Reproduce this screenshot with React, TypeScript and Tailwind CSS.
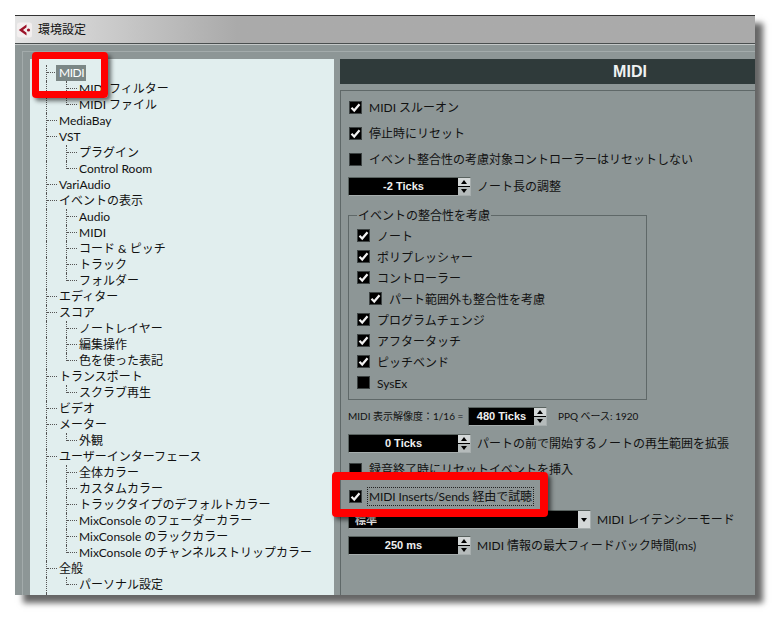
import React from 'react';

type TreeItem = { label: string; level: 1 | 2; last?: boolean; selected?: boolean };

const treeItems: TreeItem[] = [
  { label: 'MIDI', level: 1, selected: true },
  { label: 'MIDI フィルター', level: 2 },
  { label: 'MIDI ファイル', level: 2, last: true },
  { label: 'MediaBay', level: 1 },
  { label: 'VST', level: 1 },
  { label: 'プラグイン', level: 2 },
  { label: 'Control Room', level: 2, last: true },
  { label: 'VariAudio', level: 1 },
  { label: 'イベントの表示', level: 1 },
  { label: 'Audio', level: 2 },
  { label: 'MIDI', level: 2 },
  { label: 'コード & ピッチ', level: 2 },
  { label: 'トラック', level: 2 },
  { label: 'フォルダー', level: 2, last: true },
  { label: 'エディター', level: 1 },
  { label: 'スコア', level: 1 },
  { label: 'ノートレイヤー', level: 2 },
  { label: '編集操作', level: 2 },
  { label: '色を使った表記', level: 2, last: true },
  { label: 'トランスポート', level: 1 },
  { label: 'スクラブ再生', level: 2, last: true },
  { label: 'ビデオ', level: 1 },
  { label: 'メーター', level: 1 },
  { label: '外観', level: 2, last: true },
  { label: 'ユーザーインターフェース', level: 1 },
  { label: '全体カラー', level: 2 },
  { label: 'カスタムカラー', level: 2 },
  { label: 'トラックタイプのデフォルトカラー', level: 2 },
  { label: 'MixConsole のフェーダーカラー', level: 2 },
  { label: 'MixConsole のラックカラー', level: 2 },
  { label: 'MixConsole のチャンネルストリップカラー', level: 2, last: true },
  { label: '全般', level: 1 },
  { label: 'パーソナル設定', level: 2, last: true },
  { label: '', level: 1 },
];

const groupItems = [
  { label: 'ノート', checked: true },
  { label: 'ポリプレッシャー', checked: true },
  { label: 'コントローラー', checked: true },
  { label: 'パート範囲外も整合性を考慮', checked: true, nested: true },
  { label: 'プログラムチェンジ', checked: true },
  { label: 'アフタータッチ', checked: true },
  { label: 'ピッチベンド', checked: true },
  { label: 'SysEx', checked: false },
];

const TreeRow = ({ item }: { item: TreeItem }) => (
  <div className="flex h-4 pl-4">
    {item.level === 1 ? (
      <div className="w-[13px] shrink-0 border-l border-dotted border-[#555]">
        <div className="h-2 w-[10px] border-b border-dotted border-[#555]" />
      </div>
    ) : (
      <>
        <div className="w-5 shrink-0 border-l border-dotted border-[#555]" />
        <div className={`w-[13px] shrink-0 border-l border-dotted border-[#555] ${item.last ? 'h-2' : ''}`}>
          <div className="h-2 w-[10px] border-b border-dotted border-[#555]" />
        </div>
      </>
    )}
    <span
      className={
        item.selected
          ? '-ml-[3px] h-4 w-[30px] bg-[#7b8786] pl-[3px] text-xs leading-4 tracking-[-0.5px] text-white'
          : 'text-xs leading-4 whitespace-nowrap text-[#111]'
      }
    >
      {item.label}
    </span>
  </div>
);

const Checkbox = ({ checked }: { checked: boolean }) => (
  <span className="flex h-[13px] w-[13px] shrink-0 items-center justify-center border border-[#3c4242] bg-black">
    {checked && (
      <svg width="11" height="11" viewBox="0 0 11 11">
        <path d="M1.5 5.8 L4.2 8.5 L9.5 2.2" fill="none" stroke="#f2f2f2" strokeWidth="2.2" />
      </svg>
    )}
  </span>
);

const CheckRow = ({ label, checked, className = '' }: { label: string; checked: boolean; className?: string }) => (
  <div className={`flex h-[26px] items-center gap-[7px] pl-2 text-xs text-[#111] ${className}`}>
    <Checkbox checked={checked} />
    <span className="mt-[2px]">{label}</span>
  </div>
);

const SpinButtons = () => (
  <div className="flex w-[12px] shrink-0 flex-col gap-px">
    <span className="flex flex-1 items-center justify-center bg-[#d4d8d8]">
      <span className="h-0 w-0 border-x-[3px] border-b-[4px] border-x-transparent border-b-black" />
    </span>
    <span className="flex flex-1 items-center justify-center bg-[#b5bbbb]">
      <span className="h-0 w-0 border-x-[3px] border-t-[4px] border-x-transparent border-t-black" />
    </span>
  </div>
);

const Spinner = ({ value, width = 'w-[123px]' }: { value: string; width?: string }) => (
  <div className={`flex h-[19px] shrink-0 border border-[#59625f] border-r-[#a6adad] border-b-[#a6adad] bg-black ${width}`}>
    <span className="flex-1 text-center font-['Liberation_Sans',sans-serif] text-[11px] leading-[17px] font-bold text-[#eee]">
      {value}
    </span>
    <SpinButtons />
  </div>
);

const HighlightBox = ({ className }: { className: string }) => (
  <div className={`absolute rounded-[4px] border-[#f00] shadow-[3px_3px_4px_rgba(0,0,0,0.55)] ${className}`} />
);

export default function App() {
  return (
    <div className="h-[622px] w-[782px] bg-white pt-[15px] pl-[15px] font-['Lato','Noto_Sans_CJK_JP',sans-serif]">
      <div className="relative h-[580px] w-[740px] shadow-[8px_8px_6px_rgba(0,0,0,0.6)]">
        <div className="flex h-full flex-col overflow-hidden border-t border-[#333]">
          <div className="flex h-[27px] shrink-0 items-center gap-[6px] bg-gradient-to-r from-[#e4e4e4] via-[#aaaaaa] via-30% to-[#aaaaaa] pl-[2px]">
            <svg width="15" height="16" viewBox="0 0 15 16" className="shrink-0">
              <rect x="0" y="0.5" width="15" height="15" rx="2.5" fill="#f3efef" />
              <path d="M9.5 2.5 L1.8 8 L9.5 13.5 L9.5 10.8 L6 8 L9.5 5.2 Z" fill="#9c1228" />
              <circle cx="11.5" cy="8" r="1.6" fill="#9c1228" />
            </svg>
            <span className="text-xs text-[#111]">環境設定</span>
          </div>
          <div className="h-px shrink-0 bg-[#4a4f4f]" />
          <div className="h-px shrink-0 bg-[#c4c8c8]" />
          <div className="flex-1 bg-[#8d9696] pt-[6px] pl-[7px]">
            <div className="h-full border-t border-l border-[#a3abab] pt-[7px] pl-[7px]">
              <div className="flex h-full gap-[6px]">
                <div className="w-[304px] shrink-0 overflow-hidden bg-[#e1eeee] pt-[6px]">
                  {treeItems.map((item, i) => (
                    <TreeRow key={i} item={item} />
                  ))}
                </div>
                <div className="flex min-w-0 flex-1 flex-col overflow-hidden">
                  <div className="h-[25px] w-[580px] shrink-0 bg-[#2f3a3a] text-center font-['Liberation_Sans',sans-serif] text-[16px] leading-[25px] font-bold text-[#eef2f2]">
                    MIDI
                  </div>
                  <div className="mt-[6px] flex-1 border-t border-l border-[#5f6868] pt-[3px]">
                    <CheckRow label="MIDI スルーオン" checked />
                    <CheckRow label="停止時にリセット" checked />
                    <CheckRow label="イベント整合性の考慮対象コントローラーはリセットしない" checked={false} />
                    <div className="mt-[5px] flex items-center gap-[6px] pl-[7px] text-xs text-[#111]">
                      <Spinner value="-2 Ticks" />
                      <span>ノート長の調整</span>
                    </div>
                    <fieldset className="mt-[11px] ml-[7px] h-[193px] w-[299px] border border-[#5f6868] pl-2">
                      <legend className="h-4 px-[1px] text-xs leading-[18px] text-[#111]">イベントの整合性を考慮</legend>
                      <div className="pt-[2px]">
                        {groupItems.map((g) => (
                          <div
                            key={g.label}
                            className={`flex h-[21px] items-center gap-[7px] text-xs text-[#111] ${g.nested ? 'pl-3' : ''}`}
                          >
                            <Checkbox checked={g.checked} />
                            <span className="mt-[2px]">{g.label}</span>
                          </div>
                        ))}
                      </div>
                    </fieldset>
                    <div className="mt-[7px] flex items-center pl-[7px] text-[10px] text-[#111]">
                      <span className="w-[120px]">MIDI 表示解像度：1/16 =</span>
                      <Spinner value="480 Ticks" width="w-[79px]" />
                      <span className="ml-[11px]">PPQ ベース: 1920</span>
                    </div>
                    <div className="mt-[8px] flex items-center gap-[6px] pl-[7px] text-xs text-[#111]">
                      <Spinner value="0 Ticks" />
                      <span>パートの前で開始するノートの再生範囲を拡張</span>
                    </div>
                    <CheckRow label="録音終了時にリセットイベントを挿入" checked={false} className="mt-[3px]" />
                    <div className="mt-[1px] flex h-[26px] items-center gap-[5px] pl-2 text-xs text-[#111]">
                      <Checkbox checked />
                      <span className="border border-dotted border-[#222] px-px leading-[17px] tracking-[-0.1px]">
                        MIDI Inserts/Sends 経由で試聴
                      </span>
                    </div>
                    <div className="mt-[1px] flex items-center gap-[6px] pl-[7px] text-xs text-[#111]">
                      <div className="flex h-[19px] w-[243px] shrink-0 border border-[#59625f] border-r-[#a6adad] border-b-[#a6adad] bg-black">
                        <span className="flex-1 pl-[6px] text-[11px] leading-[17px] font-bold text-[#eee]">標準</span>
                        <span className="flex w-[12px] items-center justify-center bg-[#d4d8d8]">
                          <span className="h-0 w-0 border-x-[3px] border-t-[4px] border-x-transparent border-t-black" />
                        </span>
                      </div>
                      <span>MIDI レイテンシーモード</span>
                    </div>
                    <div className="mt-[7px] flex items-center gap-[6px] pl-[7px] text-xs text-[#111]">
                      <Spinner value="250 ms" />
                      <span>MIDI 情報の最大フィードバック時間(ms)</span>
                    </div>
                  </div>
                </div>
              </div>
            </div>
          </div>
        </div>
        <HighlightBox className="top-[37px] left-[17px] h-[46px] w-[76px] border-[7px]" />
        <HighlightBox className="top-[457px] left-[317px] h-[45px] w-[216px] border-[8px]" />
      </div>
    </div>
  );
}
